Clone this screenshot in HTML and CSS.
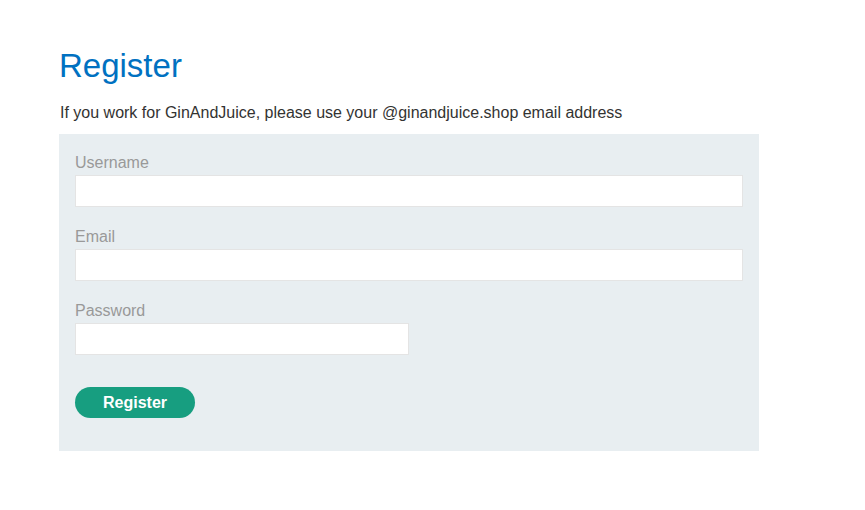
FILE: index.html
```html
<!DOCTYPE html>
<html>
<head>
<meta charset="utf-8">
<link rel="stylesheet" href="styles.css">
</head>
<body>
<main class="page">
  <h1 class="title">Register</h1>
  <p class="note">If you work for GinAndJuice, please use your @ginandjuice.shop email address</p>
  <form class="form">
    <label class="label" for="u">Username</label>
    <input class="input" id="u" type="text">
    <label class="label" for="e">Email</label>
    <input class="input" id="e" type="email">
    <label class="label" for="p">Password</label>
    <input class="input input-half" id="p" type="password">
    <button class="button" type="button">Register</button>
  </form>
</main>
</body>
</html>
```

FILE: styles.css
```css
html, body {
  margin: 0;
  padding: 0;
  background: #fff;
  font-family: "Liberation Sans", Arial, sans-serif;
  color: #333332;
}
.page {
  padding: 44px 0 0 59px;
  width: 700px;
}
.title {
  margin: 0;
  font-size: 33px;
  font-weight: normal;
  line-height: 44px;
  color: #0071c1;
}
.note {
  margin: 15px 0 0 0;
  font-size: 16px;
  line-height: 20px;
  padding-left: 1px;
}
.form {
  margin-top: 11px;
  background: #e8eef1;
  padding: 16px 16px 33px 16px;
  display: flex;
  flex-direction: column;
  align-items: flex-start;
}
.label {
  font-size: 16px;
  line-height: 25px;
  color: #999;
  height: 25px;
}
.input {
  box-sizing: border-box;
  width: 668px;
  height: 32px;
  margin: 0 0 17px 0;
  border: 1px solid #e4e4e4;
  background: #fff;
  padding: 0 8px;
  font: inherit;
  outline: none;
}
.input-half {
  width: 334px;
  margin-bottom: 32px;
}
.button {
  width: 120px;
  height: 31px;
  border: none;
  border-radius: 16px;
  background: #179e80;
  color: #fff;
  font-family: "Liberation Sans", Arial, sans-serif;
  font-weight: bold;
  font-size: 16px;
  padding: 0;
  cursor: pointer;
}
```
